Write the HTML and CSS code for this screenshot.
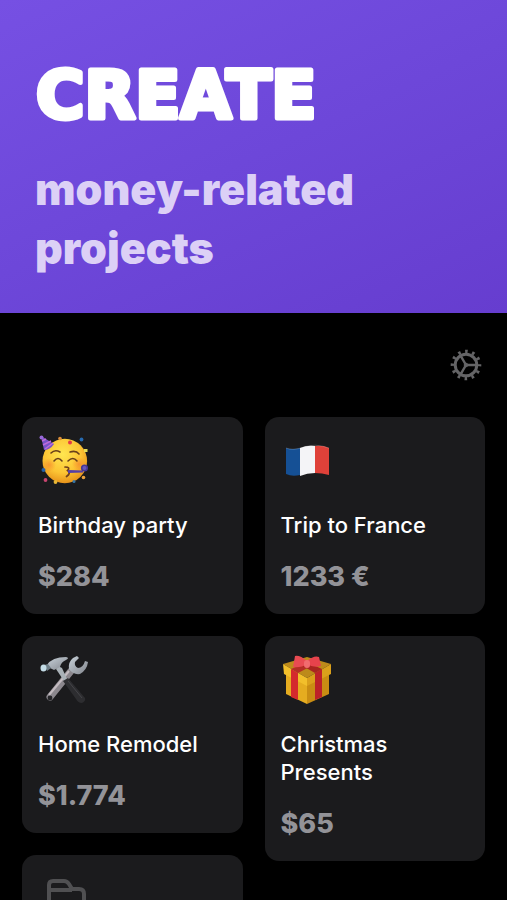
FILE: index.html
```
<!DOCTYPE html>
<html lang="en">
<head>
    <meta charset="UTF-8">
    <meta name="viewport" content="width=device-width, initial-scale=1.0">
    <title>Projects</title>
    <link rel="stylesheet" href="styles.css">
</head>
<body>
    <header class="hero">
        <h1 class="hero-title">
            <svg class="hero-word" height="62"><text x="1" y="54">CREATE</text></svg>
        </h1>
        <p class="hero-text">money-related<br>projects</p>
    </header>
    <main class="app">
        <div class="toolbar">
            <button class="settings-btn" type="button" aria-label="Settings">
                <svg viewBox="0 0 32 32" width="32" height="32" fill="none" stroke="#646466">
                    <circle cx="16" cy="16" r="10.8" stroke-width="3"/>
                    <circle cx="16" cy="16" r="13.6" stroke-width="3.4" stroke-dasharray="2.6 4.52" stroke-dashoffset="1.3"/>
                    <path d="M16 16h10M16 16l-5-8.7M16 16l-5 8.7" stroke-width="2.4"/>
                    <circle cx="16" cy="16" r="1.8" fill="#646466"/>
                </svg>
            </button>
        </div>
        <div class="projects">
            <div class="column">
                <article class="card">
                    <svg class="card-icon" viewBox="0 0 50 50">
                        <defs>
                            <radialGradient id="face" cx=".45" cy=".35" r=".68">
                                <stop offset="0" stop-color="#ffe650"/>
                                <stop offset=".6" stop-color="#fcc534"/>
                                <stop offset="1" stop-color="#e58d18"/>
                            </radialGradient>
                            <radialGradient id="cheek">
                                <stop offset="0" stop-color="#f47a2b" stop-opacity=".6"/>
                                <stop offset="1" stop-color="#f47a2b" stop-opacity="0"/>
                            </radialGradient>
                        </defs>
                        <circle cx="26.8" cy="26" r="22.3" fill="url(#face)"/>
                        <circle cx="11" cy="30" r="7" fill="url(#cheek)"/>
                        <circle cx="41" cy="29" r="7" fill="url(#cheek)"/>
                        <path d="M3 1L16 9Q12 15 6 15Z" fill="#7654c8"/>
                        <path d="M4 6l4-2M5 10l8-4M7 14l8-6" stroke="#c06ad9" stroke-width="1.5"/>
                        <circle cx="3.5" cy="2.5" r="2" fill="#9869d8"/>
                        <path d="M13 18q4-4 9-1M32 17q6-2 9 2M16 26q4-5 8 0M30 26q5-5 9 0" fill="none" stroke="#69401a" stroke-width="1.6" stroke-linecap="round"/>
                        <path d="M27 32q6 0 2.5 3.5 4 2.5-1 6" fill="none" stroke="#70401c" stroke-width="1.7" stroke-linecap="round"/>
                        <path d="M30 35L45 35.5V37.5L30 38Z" fill="#563fa5"/>
                        <circle cx="46.5" cy="33" r="2.8" fill="#6756ba" stroke="#453693" stroke-width="1.6"/>
                        <circle cx="43.5" cy="4.5" r="1.9" fill="#276ab0"/>
                        <circle cx="32" cy="7.5" r="2" fill="#e33b46"/>
                        <circle cx="22" cy="3.5" r="1.8" fill="#dc8d38"/>
                        <rect x="46" y="14" width="3.5" height="3" fill="#e5dc55"/>
                        <circle cx="5.5" cy="35" r="2" fill="#255fa6"/>
                        <circle cx="7.5" cy="45" r="1.9" fill="#c94570"/>
                        <circle cx="17.5" cy="47" r="1.9" fill="#e8b635"/>
                        <circle cx="45.5" cy="42.5" r="1.8" fill="#eba23b"/>
                        <circle cx="36" cy="46.5" r="1.5" fill="#3475a8"/>
                    </svg>
                    <h2 class="card-title">Birthday party</h2>
                    <p class="card-amount">$284</p>
                </article>
                <article class="card">
                    <svg class="card-icon" viewBox="0 0 50 50">
                        <defs>
                            <linearGradient id="steel" x1="0" y1="0" x2="1" y2="1">
                                <stop offset="0" stop-color="#c8d2da"/>
                                <stop offset="1" stop-color="#82858c"/>
                            </linearGradient>
                        </defs>
                        <path d="M33 17L12 43" stroke="#8b878d" stroke-width="7" stroke-linecap="round"/>
                        <path d="M31 17L11 41" stroke="#c3bbc0" stroke-width="2"/>
                        <path d="M39 2L35 4Q30 8 31 15 35 21 42 20 49 16 50 8L47 7Q45 14 40 14 36 12 37 8L41 4Z" fill="url(#steel)"/>
                        <circle cx="12" cy="44" r="2.4" fill="#252528"/>
                        <path d="M20 12L24 14 29 25 26 27 18 15Z" fill="#a9b1b7"/>
                        <path d="M25 27L30 24 47 44Q48 47 44 49 40 49 38 45Z" fill="#2d2d30"/>
                        <path d="M30 27L44 44" stroke="#454549" stroke-width="1"/>
                        <path d="M9 11Q14 3 28 3 32 4 28 6 23 8 22 13L16 16 12 14Z" fill="url(#steel)"/>
                        <path d="M6 11L10 10L13 14L9 17Z" fill="#6e7e87"/>
                        <ellipse cx="5.5" cy="14" rx="3" ry="3.5" fill="#c3dce6"/>
                    </svg>
                    <h2 class="card-title">Home Remodel</h2>
                    <p class="card-amount">$1.774</p>
                </article>
                <article class="card" aria-label="New project">
                    <svg class="card-icon" viewBox="0 0 50 50" fill="none" stroke="#505052" stroke-width="4" stroke-linejoin="round">
                        <path d="M11 44V12Q11 8 15 8H26Q29 8 31 11L34 16H41Q46 16 46 21V44Z"/>
                        <path d="M11 17H34"/>
                    </svg>
                </article>
            </div>
            <div class="column">
                <article class="card">
                    <svg class="card-icon" viewBox="0 0 50 50">
                        <path d="M5 13Q11 15 19 13V40Q11 42 5 39Z" fill="#155095"/>
                        <path d="M19 13Q26 10 34 11V38Q26 38 19 41Z" fill="#f4f4f7"/>
                        <path d="M34 11Q42 10 48 13V40Q41 38 34 38Z" fill="#df4139"/>
                        <path d="M5 13Q12 16 23 12T48 13" fill="none" stroke="#fff" stroke-opacity=".2"/>
                    </svg>
                    <h2 class="card-title">Trip to France</h2>
                    <p class="card-amount">1233 €</p>
                </article>
                <article class="card">
                    <svg class="card-icon" viewBox="0 0 50 50">
                        <path d="M5 17L26 28V50L5 40Z" fill="#e5ac20"/>
                        <path d="M26 28L48 17V40L26 50Z" fill="#c98d13"/>
                        <path d="M2 10L26 3L50 10L26 24Z" fill="#bd8a1a"/>
                        <path d="M2 10L26 24V32L3 20Z" fill="#f2bf2b"/>
                        <path d="M26 24L50 10V20L26 32Z" fill="#daa01b"/>
                        <path d="M10 15L17 19V46L10 43Z" fill="#d42a2d"/>
                        <path d="M34 19L41 15V43L34 46Z" fill="#bd2228"/>
                        <path d="M10 15L31 6L38 8L17 19Z" fill="#b52e25"/>
                        <path d="M13 7L19 5L41 15L34 19Z" fill="#a92520"/>
                        <path d="M26 7Q19 1 14 2 13 8 12 13 20 14 26 10Z" fill="#e94b52"/>
                        <path d="M26 7Q33 1 38 3L40 12Q32 14 26 10Z" fill="#e6434c"/>
                        <rect x="23" y="6" width="6" height="8" rx="3" fill="#f16b6e"/>
                    </svg>
                    <h2 class="card-title">Christmas Presents</h2>
                    <p class="card-amount">$65</p>
                </article>
            </div>
        </div>
    </main>
</body>
</html>
```
FILE: styles.css
```
* {
    box-sizing: border-box;
}
body {
    margin: 0;
    height: 100vh;
    overflow: hidden;
    background: #000;
    color: #fff;
    font-family: Inter, "Liberation Sans", sans-serif;
}
h1, h2, p {
    margin: 0;
}
.hero {
    padding: 64px 35px 35px;
    background: linear-gradient(155deg, #7650e3 0%, #6d47d9 50%, #663dcf 100%);
}
.hero-title {
    height: 62px;
}
.hero-word {
    display: block;
    width: 100%;
    overflow: visible;
    font-family: "DejaVu Sans", sans-serif;
    font-size: 66px;
    font-weight: 700;
    fill: #fff;
    stroke: #fff;
    stroke-width: 5px;
    stroke-linejoin: round;
}
.hero-text {
    margin-top: 34px;
    color: #dcd0f6;
    font-size: 43px;
    font-weight: 900;
    line-height: 59px;
}
.app {
    padding: 36px 22px 0;
}
.toolbar {
    display: flex;
    justify-content: flex-end;
    margin-bottom: 36px;
}
.settings-btn {
    display: flex;
    margin-right: 3px;
    padding: 0;
    border: none;
    background: none;
    cursor: pointer;
}
.projects {
    display: flex;
    align-items: flex-start;
    gap: 22px;
}
.column {
    display: flex;
    flex: 1;
    flex-direction: column;
    gap: 22px;
    min-width: 0;
}
.card {
    padding: 18px 16px;
    border-radius: 14px;
    background: #1b1b1d;
}
.card-icon {
    display: block;
    width: 50px;
    height: 50px;
}
.card-title {
    margin-top: 26px;
    font-size: 22px;
    font-weight: 500;
    line-height: 28px;
}
.card-amount {
    margin-top: 19px;
    color: #939398;
    font-size: 27px;
    font-weight: 800;
    line-height: 38px;
}
```
